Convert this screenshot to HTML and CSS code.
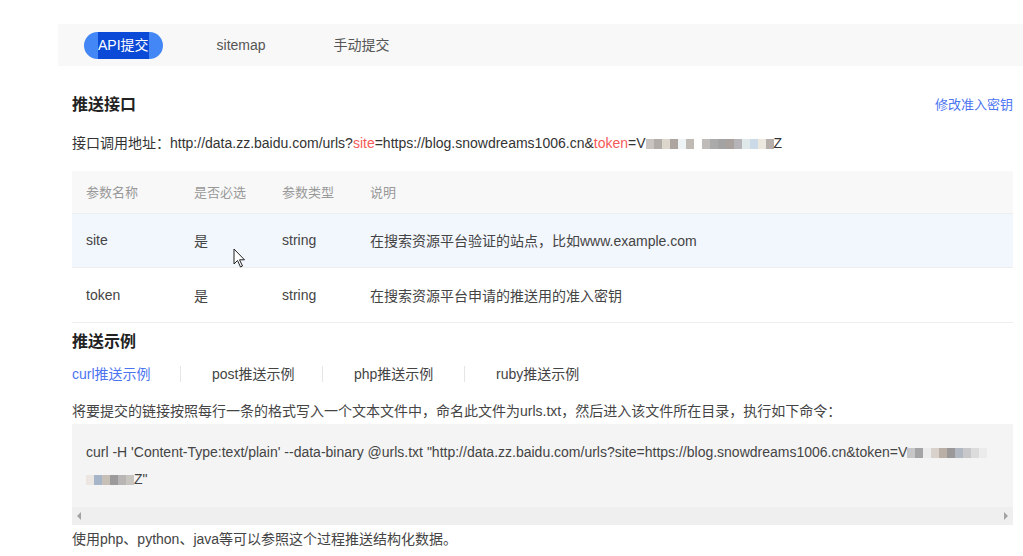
FILE: index.html
```html
<!DOCTYPE html>
<html lang="zh-CN">
<head>
  <meta charset="UTF-8" />
  <title>链接提交</title>
  <link rel="stylesheet" href="styles.css">
</head>
<body>
  <div class="page">
    <div class="tabs">
      <span class="tab active"><span class="selected">API提交</span></span>
      <span class="tab">sitemap</span>
      <span class="tab">手动提交</span>
    </div>

    <div class="content">
      <div class="section-head">
        <h2>推送接口</h2>
        <a class="link" href="#">修改准入密钥</a>
      </div>

      <p class="endpoint">
        接口调用地址：http://data.zz.baidu.com/urls?<span class="key">site</span>=https://blog.snowdreams1006.cn&amp;<span class="key">token</span>=V<span class="blur"><i style="background:#c9c4c0"></i><i style="background:#b2aca8"></i><i style="background:#ddd6cc"></i><i style="background:#ada6a0"></i><i style="background:#eef3f6"></i><i style="background:#c0bab4"></i><i style="background:#fff"></i><i style="background:#bfbbb9"></i><i style="background:#abaaab"></i><i style="background:#a5a2a3"></i><i style="background:#a9a19e"></i><i style="background:#b7b4b7"></i><i style="background:#e0e9ea"></i><i style="background:#ccd9e6"></i><i style="background:#ece8e0"></i><i style="background:#b6aeab"></i></span>Z
      </p>

      <table class="params">
        <thead>
          <tr>
            <th class="c1">参数名称</th>
            <th class="c2">是否必选</th>
            <th class="c3">参数类型</th>
            <th>说明</th>
          </tr>
        </thead>
        <tbody>
          <tr class="hover">
            <td>site</td>
            <td>是</td>
            <td>string</td>
            <td>在搜索资源平台验证的站点，比如www.example.com</td>
          </tr>
          <tr>
            <td>token</td>
            <td>是</td>
            <td>string</td>
            <td>在搜索资源平台申请的推送用的准入密钥</td>
          </tr>
        </tbody>
      </table>

      <h2 class="example-title">推送示例</h2>
      <div class="sub-tabs">
        <span class="sub-tab active">curl推送示例</span>
        <span class="sub-tab">post推送示例</span>
        <span class="sub-tab">php推送示例</span>
        <span class="sub-tab">ruby推送示例</span>
      </div>

      <p class="desc">将要提交的链接按照每行一条的格式写入一个文本文件中，命名此文件为urls.txt，然后进入该文件所在目录，执行如下命令：</p>

      <div class="code-box">
        <div class="code">
          <div class="line">curl -H 'Content-Type:text/plain' --data-binary @urls.txt "http://data.zz.baidu.com/urls?site=https://blog.snowdreams1006.cn&amp;token=V<span class="blur"><i style="background:#c6c6c8"></i><i style="background:#a4a4a6"></i><i style="background:#ececec"></i><i style="background:#d8d1cb"></i><i style="background:#b9afa6"></i><i style="background:#9a9898"></i><i style="background:#b1b8c2"></i><i style="background:#c8c8ca"></i><i style="background:#dcdcdc"></i><i style="background:#ebebeb"></i></span></div>
          <div class="line"><span class="blur"><i style="background:#ebe6e2"></i><i style="background:#a7b5c8"></i><i style="background:#c7c0b8"></i><i style="background:#9c9a9a"></i><i style="background:#b8b6b4"></i><i style="background:#c8c4bf"></i></span>Z"</div>
        </div>
        <div class="scrollbar">
          <span class="arrow left"></span>
          <span class="arrow right"></span>
        </div>
      </div>

      <p class="foot">使用php、python、java等可以参照这个过程推送结构化数据。</p>
    </div>
  </div>

  <svg class="cursor" width="14" height="20" viewBox="0 0 14 20">
    <path d="M1 1 L1 16 L4.5 12.5 L7.5 19 L9.5 18 L6.5 11.8 L11.5 11.8 Z" fill="#fff" stroke="#222" stroke-width="1" stroke-linejoin="round" />
  </svg>
</body>
</html>
```

FILE: styles.css
```css
* {
  margin: 0;
  padding: 0;
  box-sizing: border-box;
}

body {
  font-family: "Liberation Sans", "Noto Sans CJK SC", sans-serif;
  font-size: 14px;
  color: #333;
  background: #fff;
  position: relative;
}

.page {
  margin: 24px 0 0 58px;
}

.tabs {
  background: #f8f8f8;
  height: 42px;
  display: flex;
  align-items: center;
  gap: 40px;
  padding-left: 26px;
}

.tab {
  font-size: 14px;
  color: #555;
  padding: 0 14px;
  line-height: 27px;
  height: 27px;
  border-radius: 14px;
}

.tab.active {
  background: #4287f5;
  color: #fff;
}

.tab .selected {
  background: #0b4ad6;
  display: inline-block;
  height: 27px;
}

.content {
  padding: 0 10px 0 14px;
}

.section-head {
  display: flex;
  justify-content: space-between;
  align-items: center;
  margin-top: 26px;
  height: 22px;
}

h2 {
  font-size: 16px;
  font-weight: bold;
  color: #222;
}

.link {
  color: #4c74f0;
  font-size: 13px;
  text-decoration: none;
}

.endpoint {
  margin-top: 19px;
  line-height: 20px;
  white-space: nowrap;
}

.key {
  color: #f55a5a;
}

.blur {
  display: inline-flex;
  vertical-align: middle;
  height: 10px;
}

.blur i {
  display: inline-block;
  width: 8px;
  height: 10px;
}

.params {
  width: 100%;
  border-collapse: collapse;
  margin-top: 18px;
  font-size: 14px;
}

.params th {
  background: #f8f8f8;
  color: #999;
  font-weight: normal;
  font-size: 13px;
  text-align: left;
  height: 42px;
  padding-left: 14px;
  border-bottom: 1px solid #eee;
}

.params td {
  height: 54.5px;
  padding-left: 14px;
  border-bottom: 1px solid #eee;
  color: #444;
}

.params .c1 { width: 108px; }
.params .c2 { width: 88px; }
.params .c3 { width: 88px; }

.params tr.hover td {
  background: #f2f6fd;
}

.example-title {
  margin-top: 9px;
  line-height: 20px;
}

.sub-tabs {
  display: flex;
  margin-top: 14px;
  line-height: 18px;
}

.sub-tab {
  width: 142px;
  padding-left: 31px;
  border-left: 1px solid #e6e6e6;
  color: #444;
  height: 16px;
  line-height: 16px;
}

.sub-tab:first-child {
  width: 108px;
  padding-left: 0;
  border-left: none;
}

.sub-tab.active {
  color: #4c74f0;
}

.desc {
  margin-top: 19px;
  line-height: 20px;
  color: #444;
  white-space: nowrap;
}

.code-box {
  margin-top: 3px;
  background: #f4f4f4;
}

.code {
  padding: 15px 14px 10px 12px;
  height: 83px;
  overflow: hidden;
}

.code .line {
  line-height: 27px;
  white-space: nowrap;
  color: #444;
  padding-left: 2px;
}

.scrollbar {
  height: 18px;
  background: #efefef;
  position: relative;
}

.arrow {
  position: absolute;
  top: 5px;
  width: 0;
  height: 0;
  border-top: 4px solid transparent;
  border-bottom: 4px solid transparent;
}

.arrow.left {
  left: 5px;
  border-right: 4px solid #a3a3a3;
}

.arrow.right {
  right: 5px;
  border-left: 4px solid #a3a3a3;
}

.foot {
  margin-top: 4px;
  line-height: 20px;
  color: #444;
}

.cursor {
  position: absolute;
  left: 233px;
  top: 248px;
}
```
